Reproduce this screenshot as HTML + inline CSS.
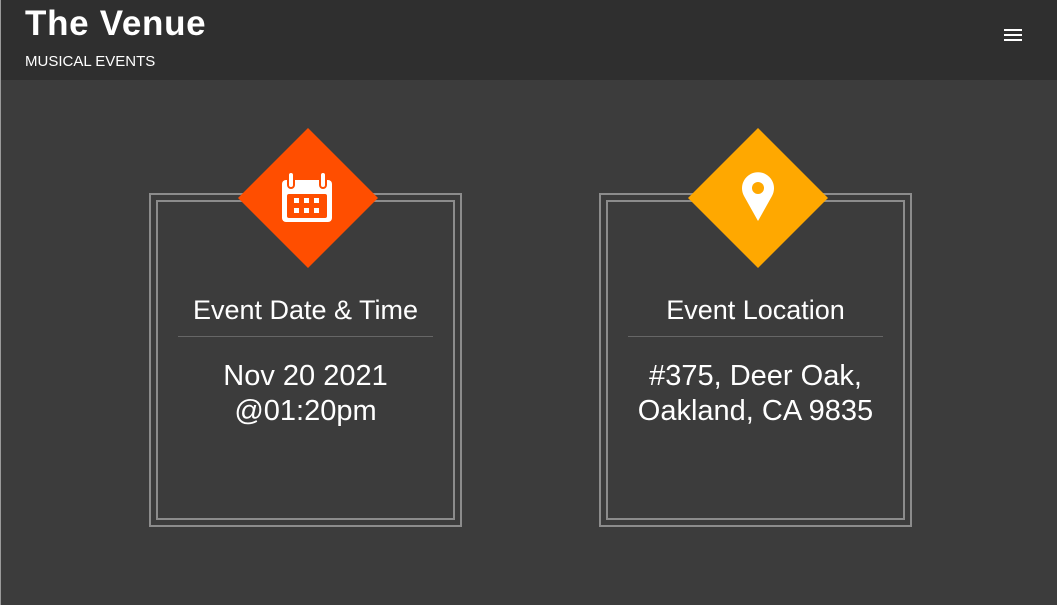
<!DOCTYPE html>
<html><head><style>
*{margin:0;padding:0;box-sizing:border-box}
body{width:1057px;height:605px;background:#3c3c3c;font-family:"Liberation Sans",sans-serif;color:#fff;position:relative;overflow:hidden}
.edge{position:absolute;left:0;top:0;width:1px;height:605px;background:#9a9a9a;z-index:5}
.hdr{position:absolute;left:0;top:0;width:1057px;height:80px;background:#2f2f2f}
.logo{position:absolute;left:25px;top:4px;font-size:35px;font-weight:bold;letter-spacing:0.7px}
.sub{position:absolute;left:25px;top:53px;font-size:15px}
.ham{position:absolute;left:1004px;width:18px;height:2px;background:#fff}
.card{position:absolute;top:193px;width:313px;height:334px;border:2px solid #8c8c8c}
.inner{position:absolute;left:5px;top:5px;right:5px;bottom:5px;border:2px solid #8c8c8c}
.dia{position:absolute;top:128px;width:140px;height:140px}
.t{position:absolute;top:295px;width:313px;text-align:center;font-size:27px}
.hr{position:absolute;top:336px;width:255px;height:1px;background:#666}
.v{position:absolute;top:359px;width:313px;text-align:center;font-size:29px;line-height:35px;font-weight:300}
</style></head><body>
<div class="edge"></div>
<div class="hdr">
<div class="logo">The Venue</div>
<div class="sub">MUSICAL EVENTS</div>
<div class="ham" style="top:29px"></div><div class="ham" style="top:34px"></div><div class="ham" style="top:39px"></div>
</div>
<div class="card" style="left:149px"><div class="inner"></div></div>
<div class="card" style="left:599px"><div class="inner"></div></div>
<svg class="dia" style="left:238px" viewBox="0 0 140 140"><polygon points="70,0 140,70 70,140 0,70" fill="#ff4e00"/>
<rect x="44" y="52" width="50" height="42" rx="4" fill="#fff"/>
<rect x="50" y="44" width="6" height="16" rx="3" fill="#fff" stroke="#ff4e00" stroke-width="2"/>
<rect x="82" y="44" width="6" height="16" rx="3" fill="#fff" stroke="#ff4e00" stroke-width="2"/>
<rect x="49" y="66" width="40" height="24" rx="2" fill="#ff4e00"/>
<g fill="#fff"><rect x="56" y="70" width="5" height="5"/><rect x="66" y="70" width="5" height="5"/><rect x="76" y="70" width="5" height="5"/><rect x="56" y="80" width="5" height="5"/><rect x="66" y="80" width="5" height="5"/><rect x="76" y="80" width="5" height="5"/></g>
</svg>
<svg class="dia" style="left:688px" viewBox="0 0 140 140"><polygon points="70,0 140,70 70,140 0,70" fill="#ffa800"/>
<path d="M70 93 L56 68 A16 16 0 1 1 84 68 Z" fill="#fff"/><circle cx="70" cy="60" r="6" fill="#ffa800"/>
</svg>
<div class="t" style="left:149px">Event Date &amp; Time</div>
<div class="t" style="left:599px">Event Location</div>
<div class="hr" style="left:178px"></div>
<div class="hr" style="left:628px"></div>
<div class="v" style="left:149px">Nov 20 2021<br>@01:20pm</div>
<div class="v" style="left:599px">#375, Deer Oak,<br>Oakland, CA 9835</div>
</body></html>
